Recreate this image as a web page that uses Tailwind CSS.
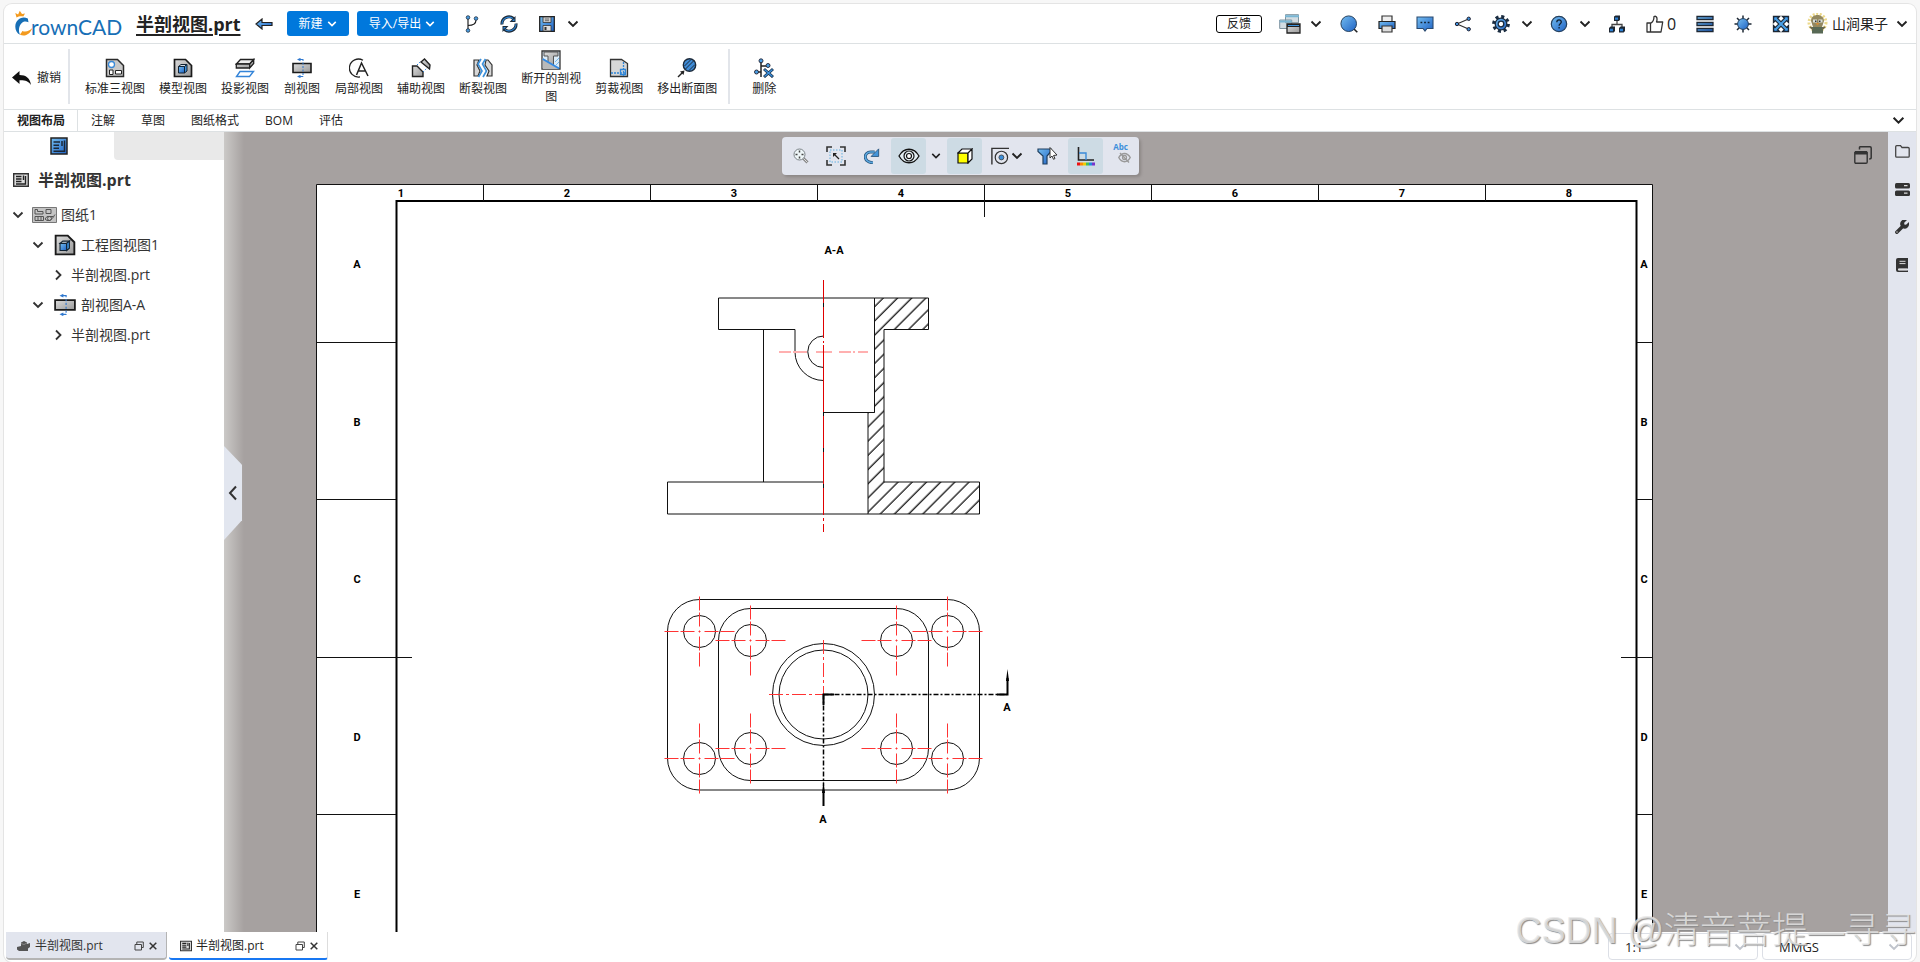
<!DOCTYPE html>
<html lang="zh-CN">
<head>
<meta charset="utf-8">
<title>半剖视图.prt - CrownCAD</title>
<meta name="viewport" content="width=device-width, initial-scale=1">
<script src="https://cdn.jsdelivr.net/npm/@tailwindcss/browser@4"></script>
</head>
<body class="h-screen overflow-hidden bg-[#f7f7f7] px-1 pt-1 font-['Open_Sans','Noto_Sans_CJK_SC',sans-serif] text-xs text-[#222]">

<!-- shared gradients and symbols -->
<svg class="absolute size-0" aria-hidden="true">
  <defs>
    <linearGradient id="blue" x1="0" y1="0" x2="1" y2="1"><stop offset="0" stop-color="#74bdf0"/><stop offset="1" stop-color="#1f62c4"/></linearGradient>
    <linearGradient id="grey" x1="0" y1="0" x2="1" y2="1"><stop offset="0" stop-color="#dcdcdc"/><stop offset="1" stop-color="#999"/></linearGradient>
    <symbol id="down" viewBox="0 0 12 12"><path d="M1.5 3.5 6 8l4.500-4.500" fill="none" stroke="currentColor" stroke-width="1.900"/></symbol>
    <symbol id="right" viewBox="0 0 12 12"><path d="M4 1.500 8.500 6 4 10.500" fill="none" stroke="currentColor" stroke-width="1.800"/></symbol>
    <symbol id="sheet" viewBox="0 0 16 16"><path d="M.7 1.700h14.600v12.600H.700z" fill="#ddd" stroke="#333" stroke-width="1.400"/><path d="M3 4.500h5.500M3 7h5.500M3 9.500h5.500M3 12h9.500V4M10.500 3.500V8" fill="none" stroke="#222" stroke-width="1.400"/></symbol>
    <symbol id="modelview" viewBox="0 0 20 20"><path d="M1.500 1.500h11l6 6v11h-17z" fill="url(#grey)" stroke="#1a1a1a" stroke-width="1.700"/><path d="M5.500 8.500h6v6.500h-6z" fill="url(#blue)" stroke="#123" stroke-width="1"/><path d="m5.500 8.500 2.500-2h6l-2.500 2z" fill="#d5dde4" stroke="#123" stroke-width="1"/><path d="M14 6.500v6.500l-2.500 2V8.500z" fill="#3f8fd8" stroke="#123" stroke-width="1"/></symbol>
    <symbol id="section" viewBox="0 0 20 20"><path d="M1 5.500h18v9H1z" fill="url(#grey)" stroke="#1a1a1a" stroke-width="1.600"/><path d="M11 1v18" stroke="#2f78cf" stroke-width="1" stroke-dasharray="2 1.500"/><path d="M11 1.500H7M11 18.500H7" stroke="#2f78cf"/><path d="m5 1.500 3.500-1.700v3.400zM5 18.500l3.500-1.700v3.400z" fill="#2f78cf"/></symbol>
    <symbol id="restore" viewBox="0 0 10 10"><path d="M1 3.500h6.500v5.500H1zM2.800 3.500V1H9.300v5.500H7.500" fill="none" stroke="#444" stroke-width="1"/></symbol>
  </defs>
</svg>

<div class="relative flex h-full flex-col overflow-hidden rounded-lg bg-white shadow-[0_0_0_1px_#e4e4e4]">

  <!-- top bar -->
  <header class="flex h-10 shrink-0 items-center justify-between border-b border-[#dde1e3] pl-[11px]">
    <div class="flex items-center">
      <svg class="h-7 w-[110px]" viewBox="0 0 110 28" role="img" aria-label="CrownCAD">
        <path d="M12.800 8.500C6.500 5.500.300 10 .300 16.800c0 3.600 1.800 6.600 4.700 8C3.200 20.500 3.800 15.800 7 12.800c1.800-1.700 4.300-1.800 6.500-.500z" fill="#176fb6"/>
        <path d="M4.800 24.600C9.800 27.300 15.500 24 17.200 18c-2.600 3-6.400 4.300-9.800 3-.800 1.600-1.600 2.800-2.600 3.600z" fill="#f39a1e"/>
        <path d="M1.500 7.500.300 3l2.800 1.500L4.800.800 7 4 10 3.500 8.300 6.500C6 5.800 3.500 6.300 1.500 7.500z" fill="#f39a1e"/>
        <text x="16" y="25" class="font-[Lato,sans-serif] text-[21px]" fill="#176fb6">rownCAD</text>
      </svg>
      <a href="#" class="ml-[11px] text-lg font-bold text-[#222] underline decoration-2 underline-offset-3">半剖视图.prt</a>
      <button class="ml-[14px] grid h-6 w-[18px] place-items-center" aria-label="返回"><svg class="h-3 w-[18px]" viewBox="0 0 18 12"><path d="M1 6 7 1v3.500h10v3H7V11z" fill="url(#blue)" stroke="#222" stroke-width="1.200"/></svg></button>
      <button class="ml-[14px] flex h-[25px] w-[62px] items-center justify-center gap-1 rounded-[3px] bg-[#0078dc] text-white">新建<svg class="size-[10px]"><use href="#down"/></svg></button>
      <button class="ml-2 flex h-[25px] w-[91px] items-center justify-center gap-1 rounded-[3px] bg-[#0078dc] text-white">导入/导出<svg class="size-[10px]"><use href="#down"/></svg></button>
      <button class="ml-3 grid h-6 w-6 place-items-center" aria-label="分支"><svg class="h-[18px] w-[14px]" viewBox="0 0 14 18"><path d="M3 3v12M3 10.500c5 0 8-1.500 8-5.500" fill="none" stroke="#222" stroke-width="1.200"/><g fill="#4a9be0" stroke="#234" stroke-width=".8"><circle cx="3" cy="2.500" r="1.800"/><circle cx="11" cy="3.500" r="1.800"/><circle cx="3" cy="15.500" r="1.800"/></g></svg></button>
      <button class="ml-[13px] grid h-6 w-6 place-items-center" aria-label="刷新"><svg class="size-[18px]" viewBox="0 0 18 18"><path d="M2 9.500a7 7 0 0 1 11.500-6M16 8.500A7 7 0 0 1 4.500 14.500" fill="none" stroke="#1d2a38" stroke-width="3"/><path d="M2 9a7 7 0 0 1 11.500-5.200M16 9A7 7 0 0 1 4.500 14.200" fill="none" stroke="#2f86d6" stroke-width="1.100"/><path d="M15.500 1v6h-6zM2.500 17v-6h6z" fill="#1d2a38"/><path d="M14.500 3.500V6H12zM3.500 14.500V12H6z" fill="#2f86d6"/></svg></button>
      <button class="ml-[14px] grid h-6 w-6 place-items-center" aria-label="保存"><svg class="size-4" viewBox="0 0 16 16"><path d="M.7.700h14.600v14.600H.700z" fill="url(#blue)" stroke="#222" stroke-width="1.300"/><path d="M4 1h8v5.500H4z" fill="#ccc" stroke="#333" stroke-width=".8"/><path d="M6 3h4M6 4.700h4" stroke="#555" stroke-width=".8"/><path d="M4 9.500h8V15H4z" fill="#ddd" stroke="#333" stroke-width=".8"/><path d="M5.500 11h2v3h-2z" fill="#333"/></svg></button>
      <button class="ml-2 grid h-6 w-3 place-items-center" aria-label="保存选项"><svg class="size-3"><use href="#down"/></svg></button>
    </div>

    <div class="flex items-center">
      <button class="mr-[9px] h-[18px] w-[46px] rounded-[3px] border border-black leading-4">反馈</button>
      <button class="grid h-7 w-[38px] place-items-center" aria-label="窗口"><svg class="h-5 w-[22px]" viewBox="0 0 22 20"><path d="M6.500.700h13v8h-13zM.700 6h12v8.500H.700z" fill="#d2dce2" stroke="#7d929e"/><path d="M6 2.200h14M.700 7.500h12" stroke="#79b6d4" stroke-width="2"/><path d="M8 10h13v9H8z" fill="url(#grey)" stroke="#222" stroke-width="1.300"/><path d="M8 11.500h13" stroke="#222" stroke-width="3"/><path d="M9 11.500h11" stroke="#3a91dc" stroke-width="1.200"/></svg></button>
      <button class="grid h-7 w-[14px] place-items-center" aria-label="窗口选项"><svg class="size-3"><use href="#down"/></svg></button>
      <button class="ml-[7px] grid h-7 w-[38px] place-items-center" aria-label="搜索"><svg class="size-[18px]" viewBox="0 0 18 18"><path d="m14 14 3.300 3.300" stroke="#222" stroke-width="1.600"/><circle cx="8.700" cy="8.700" r="7.800" fill="url(#blue)" stroke="#26415e"/></svg></button>
      <button class="grid h-7 w-[38px] place-items-center" aria-label="打印"><svg class="size-[18px]" viewBox="0 0 18 18"><path d="M4 1h10v6H4z" fill="#eee" stroke="#333" stroke-width="1.200"/><path d="M1 6.500h16v7H1z" fill="url(#blue)" stroke="#222" stroke-width="1.200"/><path d="M4 11h10v6H4z" fill="#ddd" stroke="#333" stroke-width="1.200"/></svg></button>
      <button class="grid h-7 w-[38px] place-items-center" aria-label="消息"><svg class="size-[18px]" viewBox="0 0 18 18"><path d="M1 2h16v11.500h-6L9 16l-2-2.500H1z" fill="url(#blue)" stroke="#2a4a70" stroke-width="1.100"/><path d="M4.500 7.500h1.800M8.100 7.500h1.800M11.700 7.500h1.800" stroke="#123" stroke-width="1.600"/></svg></button>
      <button class="grid h-7 w-[38px] place-items-center" aria-label="分享"><svg class="size-[18px]" viewBox="0 0 18 18"><path d="M14.500 4 3 9l11.500 5" fill="none" stroke="#333" stroke-width="1.200"/><g fill="#3d8fda" stroke="#223" stroke-width="1"><circle cx="14.700" cy="3.800" r="1.700"/><circle cx="3" cy="9" r="1.700"/><circle cx="14.700" cy="14.200" r="1.700"/></g></svg></button>
      <button class="grid h-7 w-[38px] place-items-center" aria-label="设置"><svg class="size-[18px]" viewBox="0 0 18 18"><circle cx="9" cy="9" r="7.200" fill="none" stroke="#1a2c40" stroke-width="3.400" stroke-dasharray="3 2.650"/><circle cx="9" cy="9" r="5.800" fill="url(#blue)" stroke="#1a2c40" stroke-width="1.300"/><circle cx="9" cy="9" r="2.800" fill="#fff" stroke="#1a2c40" stroke-width="1.300"/></svg></button>
      <button class="grid h-7 w-[14px] place-items-center" aria-label="设置选项"><svg class="size-3"><use href="#down"/></svg></button>
      <button class="ml-[6px] grid h-7 w-[38px] place-items-center" aria-label="帮助"><svg class="size-[18px]" viewBox="0 0 18 18"><circle cx="9" cy="9" r="7.700" fill="url(#blue)" stroke="#26415e" stroke-width="1.200"/><path d="M6.800 7.200c0-3.200 4.600-3 4.500-.2 0 1.700-2.200 1.700-2.200 3.700M9.100 12v1.500" fill="none" stroke="#123" stroke-width="1.300"/></svg></button>
      <button class="grid h-7 w-[14px] place-items-center" aria-label="帮助选项"><svg class="size-3"><use href="#down"/></svg></button>
      <button class="ml-[6px] grid h-7 w-[38px] place-items-center" aria-label="组织结构"><svg class="size-[18px]" viewBox="0 0 18 18"><path d="M9 5v4M4 13V9.500h10V13" fill="none" stroke="#444" stroke-width="1.300"/><path d="M6 1.500 7.500.500H12V5l-1.300 1H6zM1 13l1.500-1.500H7V16l-1.300 1.500H1zM11 13l1.500-1.500H17V16l-1.300 1.500H11z" fill="#1d2733"/><path d="M7 2.500h3v2.300H7zM2 13.800h3v2.500H2zM12 13.800h3v2.500h-3z" fill="#2c80d3"/></svg></button>
      <button class="flex h-7 w-[50px] items-center gap-[3px] pl-[10px] text-base" aria-label="点赞 0"><svg class="size-[18px]" viewBox="0 0 18 18"><path d="M1 8h3.500v9H1zM4.500 8.500C7 7 8 5 8 1.500c2.500-1 3.800 1.500 2.500 5.500h6.200L15 17H4.500" fill="#fff" stroke="#333" stroke-width="1.300" stroke-linejoin="round"/></svg>0</button>
      <button class="grid h-7 w-[38px] place-items-center" aria-label="列表"><svg class="size-[18px]" viewBox="0 0 18 18"><g fill="url(#blue)" stroke="#1d2733" stroke-width="1.300"><path d="M1 1.500h16v3H1zM1 7.500h16v3H1zM1 13.500h16v3H1z"/></g></svg></button>
      <button class="grid h-7 w-[38px] place-items-center" aria-label="主题"><svg class="size-[18px]" viewBox="0 0 18 18"><path d="M9 .500v17M.500 9h17M3 3l12 12M15 3 3 15" stroke="#1d2733" stroke-width="1.500"/><circle cx="9" cy="9" r="5.400" fill="url(#blue)" stroke="#26415e"/></svg></button>
      <button class="grid h-7 w-[38px] place-items-center" aria-label="全屏"><svg class="size-[18px]" viewBox="0 0 18 18"><path d="M3 3l12 12M15 3 3 15" stroke="#1d2733" stroke-width="4.400"/><path d="M1.500 1.500h6l-6 6zM16.500 1.500v6l-6-6zM1.500 16.500v-6l6 6zM16.500 16.500h-6l6-6z" fill="#2c80d3" stroke="#1d2733" stroke-width="1.300"/><path d="M3 3l12 12M15 3 3 15" stroke="#4a9fe4" stroke-width="2.200"/></svg></button>
      <button class="ml-[7px] flex h-7 items-center gap-1 pr-2 text-sm">
        <svg class="size-[21px]" viewBox="0 0 21 21"><circle cx="10.500" cy="9.500" r="8.500" fill="none" stroke="#ecd98c" stroke-width="3" stroke-dasharray="2 1.500"/><path d="M4 8c0-4 3-6 6.500-6S17 4.500 17 8l-2 6H6z" fill="#93885f"/><path d="M6 6.500h4v3H6zM11.500 6.500h4v3h-4z" fill="#d9dfda"/><path d="M8 7.500h1.500V9H8zM12 7.500h1.500V9H12z" fill="#333"/><path d="M8.500 10h4l-2 2.500z" fill="#d38b35"/><path d="M5 14h11v6.500H5z" fill="#586955"/><path d="m3 14 3 2M18 14l-3 2" stroke="#6f6a4c" stroke-width="2"/></svg>
        <span>山涧果子</span>
        <svg class="ml-1 size-3"><use href="#down"/></svg>
      </button>
    </div>
  </header>

  <!-- ribbon -->
  <div class="flex h-[66px] shrink-0 items-center border-b border-[#dde1e3] pt-[2px] whitespace-nowrap">
    <button class="ml-2 flex items-center gap-[6px]"><svg class="h-[14px] w-[19px]" viewBox="0 0 19 14"><path d="M0 6.500 7.500 0v4C14 4 18 7 19 14c-2.500-4-6-5-11.500-4.800V13z" fill="#111"/></svg>撤销</button>
    <span class="mb-[2px] ml-[7px] h-[55px] w-[2px] bg-[#e2e5ea]"></span>
    <div class="ml-2 flex items-center">
      <button class="flex flex-col items-center px-[7px] leading-[18px]"><svg class="mb-[2px] size-5" viewBox="0 0 20 20"><path d="M1.500 1.500h11l6 6v11h-17z" fill="#c9c9c9" stroke="#2a2a2a" stroke-width="1.500"/><circle cx="6.500" cy="6.500" r="3" fill="#fff" stroke="#3a8ad8" stroke-width="1.300"/><path d="M4.500 12h3.500v4.500H4.500zM10.500 12.500h6V16h-6z" fill="#fff" stroke="#222"/></svg>标准三视图</button>
      <button class="flex flex-col items-center px-[7px] leading-[18px]"><svg class="mb-[2px] size-5"><use href="#modelview"/></svg>模型视图</button>
      <button class="flex flex-col items-center px-[7px] leading-[18px]"><svg class="mb-[2px] size-5" viewBox="0 0 20 20"><path d="M5.500 1.500h13.200l-4 4.500H1.300z" fill="#eee" stroke="#222" stroke-width="1.300"/><path d="M1.300 6h13.400v4H1.300zM14.700 6l4-4.500v4l-4 4.500z" fill="url(#grey)" stroke="#222" stroke-width="1.300"/><path d="M5 13.500h13.500l-4 5H1.500z" fill="#fff" stroke="#3484d8" stroke-width="1.400"/></svg>投影视图</button>
      <button class="flex flex-col items-center px-[8px] leading-[18px]"><svg class="mb-[2px] size-5"><use href="#section"/></svg>剖视图</button>
      <button class="flex flex-col items-center px-[7px] leading-[18px]"><svg class="mb-[2px] size-5" viewBox="0 0 20 20"><path d="M14 2.300A9 9 0 1 0 11 18.900" fill="none" stroke="#222" stroke-width="1.300"/><path d="M7.500 17 12.500 5l6.500 13M9.500 13h7" fill="none" stroke="#222" stroke-width="1.500"/></svg>局部视图</button>
      <button class="flex flex-col items-center px-[7px] leading-[18px]"><svg class="mb-[2px] size-5" viewBox="0 0 20 20"><path d="M1.500 8h4.500l6 6v4.500H1.500z" fill="url(#grey)" stroke="#222" stroke-width="1.400"/><path d="m6 7 4-4M12 14l4-4" stroke="#3484d8" stroke-dasharray="1.500 1.500"/><path d="m10 4 3.500-3 5.500 6-.500 4z" fill="url(#grey)" stroke="#222" stroke-width="1.400"/></svg>辅助视图</button>
      <button class="flex flex-col items-center px-[7px] leading-[18px]"><svg class="mb-[2px] size-5" viewBox="0 0 20 20"><path d="M6 2H1v16h4l2-5-3-6zM13 2h2l4 5v11h-5l2-5-4-6z" fill="#d7d7d7" stroke="#333" stroke-width="1.200"/><path d="M8 1 5 6l4 7-3.500 6M12.500 1 9.500 6l4 7L10 19" fill="none" stroke="#3e91da" stroke-width="1.700"/></svg>断裂视图</button>
      <button class="flex flex-col items-center px-[7px] leading-[18px]"><svg class="size-5" viewBox="0 0 20 20"><path d="M1 1h18v18H1z" fill="#dcecf8" stroke="#333" stroke-width="1.300"/><path d="M3 2h14v4h-4.500v10L7 12V6H3z" fill="url(#grey)" stroke="#555"/><path d="m1.700 8 16.600 11H1.700z" fill="#b9b9b9"/><path d="m1.700 9 16.500 9.500" stroke="#3289e3" stroke-width="2"/><path d="m14 12 4-4M15 15l3-3" stroke="#77b7eb"/></svg>断开的剖视<br>图</button>
      <button class="flex flex-col items-center px-[7px] leading-[18px]"><svg class="mb-[2px] size-5" viewBox="0 0 20 20"><path d="M1.500 1.500h11l6 4v13h-17z" fill="#d7d7d7" stroke="#333" stroke-width="1.300"/><path d="M2 15h15M14.500 4v14" fill="none" stroke="#2f86d8" stroke-width="1.300" stroke-dasharray="2 1"/><path d="M11.500 11.500h5v5h-5z" fill="none" stroke="#2f86d8" stroke-width="1.300"/></svg>剪裁视图</button>
      <button class="flex flex-col items-center px-[7px] leading-[18px]"><svg class="mb-[2px] size-5" viewBox="0 0 20 20"><circle cx="12.500" cy="7" r="6.200" fill="#3e8cd8" stroke="#1c2a3a" stroke-width="1.400"/><path d="m7.500 8 6-6M8.500 11l8.500-8.500M12 12.500l6-6" stroke="#1c2a3a"/><path d="m1 19 4-4" stroke="#222" stroke-width="1.400"/><path d="m7.500 12.500-1 4.500-3.500-3.500z" fill="#222"/></svg>移出断面图</button>
    </div>
    <span class="mb-[2px] ml-1 h-[55px] w-[2px] bg-[#e2e5ea]"></span>
    <button class="ml-[15px] flex flex-col items-center px-[7px] leading-[18px]"><svg class="mb-[2px] size-5" viewBox="0 0 20 20"><path d="M7 3v16M7 8h7M2.500 14H7" stroke="#222" stroke-width="1.500"/><g fill="#4a9fe4" stroke="#223" stroke-width=".9"><circle cx="7" cy="2.800" r="2"/><circle cx="14" cy="7.500" r="2"/><circle cx="2.500" cy="14" r="2"/></g><path d="m10 11 9 8M19 11l-9 8" stroke="#1d3550" stroke-width="3"/><path d="m10.500 11.500 8 7M18.500 11.500l-8 7" stroke="#3c91dd" stroke-width="1.300"/></svg>删除</button>
  </div>

  <!-- ribbon tabs -->
  <nav class="flex h-[22px] shrink-0 items-stretch border-b border-[#dde1e3]">
    <button class="border-r border-[#dde1e3] pr-3 pl-[13px] font-bold">视图布局</button>
    <button class="px-[13px]">注解</button>
    <button class="px-[13px]">草图</button>
    <button class="px-[13px]">图纸格式</button>
    <button class="px-[13px]">BOM</button>
    <button class="px-[13px]">评估</button>
    <button class="mr-[11px] ml-auto grid place-items-center" aria-label="收起工具栏"><svg class="size-[13px]"><use href="#down"/></svg></button>
  </nav>

  <main class="flex min-h-0 flex-1">
    <!-- model tree -->
    <aside class="w-[220px] shrink-0 bg-white text-sm text-[#333]">
      <div class="flex h-7">
        <button class="grid flex-1 place-items-center" aria-label="模型树"><svg class="size-[18px]" viewBox="0 0 18 18"><path d="M1 1h16v16H1z" fill="url(#blue)" stroke="#222" stroke-width="1.500"/><path d="M3.500 5H10M3.500 8.200h5.500M3.500 11.200h5.500M3.500 14.300h11V3.500M12 4v5" fill="none" stroke="#1b2736" stroke-width="1.500"/></svg></button>
        <button class="flex-1 rounded-bl bg-[#e9e9e9]" aria-label="属性"></button>
      </div>
      <h1 class="flex h-10 items-center gap-[9px] pl-[9px] text-base font-bold"><svg class="size-4"><use href="#sheet"/></svg>半剖视图.prt</h1>
      <ul>
        <li class="flex h-[30px] items-center pl-2">
          <button class="mr-2 grid size-3 place-items-center" aria-label="折叠"><svg class="size-3"><use href="#down"/></svg></button>
          <svg class="mr-1 h-4 w-[25px]" viewBox="0 0 25 16"><path d="M.5.500h24v15H.500z" fill="#c4c4c4" stroke="#777"/><path d="M3 2.500h2.500V4.500H11v2.500H3zM14 2.500h5v4h-5zM3 9.500h8.500v4H3zM6 9.500v4M9 9.500v4M13 12l2-2.500h6.500l1.500-2M13 12l2 1.500h3l4-4" fill="none" stroke="#555"/><circle cx="17.500" cy="11.500" r="2" fill="none" stroke="#555"/></svg>图纸1
        </li>
        <li class="flex h-[30px] items-center pl-7">
          <button class="mr-[10px] grid size-3 place-items-center" aria-label="折叠"><svg class="size-3"><use href="#down"/></svg></button>
          <svg class="mr-[5px] size-[22px]"><use href="#modelview"/></svg>工程图视图1
        </li>
        <li class="flex h-[30px] items-center pl-12">
          <button class="mr-[7px] grid size-3 place-items-center" aria-label="展开"><svg class="size-3"><use href="#right"/></svg></button>半剖视图.prt
        </li>
        <li class="flex h-[30px] items-center pl-7">
          <button class="mr-[10px] grid size-3 place-items-center" aria-label="折叠"><svg class="size-3"><use href="#down"/></svg></button>
          <svg class="mr-[5px] size-[22px]"><use href="#section"/></svg>剖视图A-A
        </li>
        <li class="flex h-[30px] items-center pl-12">
          <button class="mr-[7px] grid size-3 place-items-center" aria-label="展开"><svg class="size-3"><use href="#right"/></svg></button>半剖视图.prt
        </li>
      </ul>
    </aside>

    <!-- drawing canvas -->
    <section class="relative min-w-0 flex-1 overflow-hidden bg-[#a6a1a0]">
      <svg class="block h-full w-full" viewBox="224 132 1664 800" preserveAspectRatio="xMinYMin slice" fill="none" stroke="#111" stroke-width="1">
        <defs>
          <linearGradient id="edge" x1="0" x2="1"><stop offset="0" stop-color="#cbc9c7"/><stop offset="1" stop-color="#a6a1a0"/></linearGradient>
          <pattern id="hatch" width="10.040" height="10" patternUnits="userSpaceOnUse" patternTransform="rotate(45)"><path d="M2 0v10" stroke="#000" stroke-width="1.200"/></pattern>
          <g id="hole"><circle r="16"/><path d="M-35 0h70M0-35v70" stroke="#f33" stroke-dasharray="14 2 14 4 2 4 14 2 14"/></g>
        </defs>
        <path d="M224 132h20v800h-20z" fill="url(#edge)" stroke="none"/>
        <path d="M316.500 184.500h1336v800h-1336z" fill="#fff"/>
        <path d="M396.500 985V201h1240V985" stroke="#000" stroke-width="2"/>
        <path d="M483.500 185v16M650.500 185v16M817.500 185v16M984.500 185v32M1151.500 185v16M1318.500 185v16M1485.500 185v16"/>
        <path d="M317 342.500h79M317 499.500h79M317 657.500h95M317 814.500h79M1637 342.500h15M1637 499.500h15M1621 657.500h31M1637 814.500h15"/>
        <g class="font-[Roboto,sans-serif] text-[11px] font-bold" fill="#000" stroke="none" text-anchor="middle">
          <text x="401" y="197">1</text><text x="567" y="197">2</text><text x="734" y="197">3</text><text x="901" y="197">4</text><text x="1068" y="197">5</text><text x="1235" y="197">6</text><text x="1402" y="197">7</text><text x="1569" y="197">8</text>
          <text x="357" y="268">A</text><text x="357" y="426">B</text><text x="357" y="583">C</text><text x="357" y="741">D</text><text x="357" y="898">E</text>
          <text x="1644" y="268">A</text><text x="1644" y="426">B</text><text x="1644" y="583">C</text><text x="1644" y="741">D</text><text x="1644" y="898">E</text>
          <text x="834" y="254">A-A</text><text x="1007" y="711">A</text><text x="823" y="823">A</text>
        </g>

        <!-- section A-A -->
        <path d="M874.500 298H928.500V329.500H884V482H979.500V514H868V412.500H874.500z" fill="url(#hatch)"/>
        <path d="M823.500 298h-105v31.500H795V352a28.500 28.500 0 0 0 28.500 28.500M823.500 336a15.750 15.750 0 0 0 0 31.500M763.500 329.500V482M823.500 482h-156v32H868M823.500 298h51M823.500 412.500h51"/>
        <path d="M779 352h12M793 352h14M816 352h16M839 352h12M853 352h2M858 352h10" stroke="#ffb0b0" stroke-width="2"/>
        <path d="M823.500 280v58M823.500 341v2M823.500 345v170M823.500 518v3M823.500 524v8" stroke="#e00000"/>
        <path d="M823.500 303v4M823.500 412v4M823.500 448v4M823.500 484v4"/>

        <!-- plan view -->
        <rect x="667.500" y="599.500" width="312" height="190.500" rx="32"/>
        <rect x="718.500" y="608.500" width="210" height="172" rx="32"/>
        <circle cx="823.500" cy="694.500" r="51"/>
        <circle cx="823.500" cy="694.500" r="44.500"/>
        <use href="#hole" x="699.500" y="631.500"/><use href="#hole" x="947.500" y="631.500"/><use href="#hole" x="699.500" y="758.500"/><use href="#hole" x="947.500" y="758.500"/>
        <use href="#hole" x="750.500" y="640.500"/><use href="#hole" x="896.500" y="640.500"/><use href="#hole" x="750.500" y="748.500"/><use href="#hole" x="896.500" y="748.500"/>
        <path d="M823.500 640v54M769 694.500h54" stroke="#f33" stroke-dasharray="14 3 3 3"/>
        <path d="M823.500 694.500H1007M823.500 694.500V786" stroke="#000" stroke-width="1.500" stroke-dasharray="5 2 2 2"/>
        <path d="M823.500 705V694.500H834M997 694.500H1007.500V678M823.500 806V790" stroke="#000" stroke-width="2"/>
        <path d="m1007.500 669 1.500 12h-3zM823.500 781l1.500 12h-3z" fill="#000" stroke="none"/>
      </svg>

      <!-- panel handle -->
      <button class="absolute top-[314px] left-0 grid h-[94px] w-[18px] place-items-center bg-[#e2e6ef] [clip-path:polygon(0_0,100%_20%,100%_79%,0_100%)]" aria-label="收起面板"><svg class="h-4 w-[10px]" viewBox="0 0 10 16"><path d="M8 1.500 2 8l6 6.500" fill="none" stroke="#333" stroke-width="2"/></svg></button>

      <!-- view toolbar -->
      <div class="absolute top-[5px] left-[558px] flex h-[38px] w-[357px] items-center rounded bg-[#e2e5ee] pl-[1px] shadow-[2px_2px_3px_#8c8786]">
        <button class="grid h-9 w-[35px] place-items-center" aria-label="缩放"><svg class="size-4" viewBox="0 0 16 16"><path d="m9.500 9.500 5 5" stroke="#888" stroke-width="3"/><path d="m9.500 9.500 5 5" stroke="#ddd" stroke-width="1"/><circle cx="6.500" cy="6.500" r="5.500" fill="#eef6f8" stroke="#7b8287"/><path d="M6.500 2.500v2M6.500 8.500v2M2.500 6.500h2M8.500 6.500h2" stroke="#444" stroke-width="1.500"/></svg></button>
        <button class="grid h-9 w-[35px] place-items-center" aria-label="适应窗口"><svg class="size-5" viewBox="0 0 20 20"><path d="M1 6V1h5M14 1h5v5M19 14v5h-5M6 19H1v-5" fill="none" stroke="#333" stroke-width="1.600"/><path d="M4 4h12v12H4z" fill="none" stroke="#62b1e2" stroke-dasharray="1.500 1.500"/><path d="m8 8 5 5" stroke="#222" stroke-width="1.300"/><path d="M7 7h4l-4 4z" fill="#222"/></svg></button>
        <button class="ml-[1px] grid h-9 w-[35px] place-items-center" aria-label="旋转"><svg class="size-4" viewBox="0 0 18 18"><path d="M10 16.500C-1 16.500-1 4 8 4.500h4" fill="none" stroke="#27547a" stroke-width="3.400"/><path d="M10 16.500C-1 16.500-1 4 8 4.500h4" fill="none" stroke="#5aa7e0" stroke-width="1.800"/><path d="M16.500 1v8.500H8z" fill="#4395da" stroke="#27547a"/></svg></button>
        <button class="ml-[2px] grid h-9 w-[35px] place-items-center rounded-[3px] bg-[#cddbe4]" aria-label="显示"><svg class="h-4 w-[22px]" viewBox="0 0 22 16"><path d="M1 8c5-9 15-9 20 0-5 9-15 9-20 0z" fill="#e2edf2" stroke="#111" stroke-width="1.300"/><circle cx="11" cy="8" r="5" fill="none" stroke="#111" stroke-width="1.200"/><circle cx="11" cy="8" r="2.500" fill="#fff" stroke="#111" stroke-width="1.200"/></svg></button>
        <button class="grid h-9 w-5 place-items-center" aria-label="显示选项"><svg class="size-[10px]"><use href="#down"/></svg></button>
        <button class="ml-[1px] grid h-9 w-[35px] place-items-center rounded-[3px] bg-[#cddbe4]" aria-label="渲染模式"><svg class="size-4" viewBox="0 0 16 16"><path d="M1 5h10v10H1z" fill="#ff0" stroke="#111" stroke-width="1.200"/><path d="m1 5 4-4h10l-4 4zM15 1v10l-4 4V5z" fill="#fff" stroke="#111" stroke-width="1.200"/></svg></button>
        <button class="ml-2 flex h-9 w-9 items-center gap-[2px]" aria-label="标注显示"><svg class="h-[18px] w-[19px] shrink-0" viewBox="0 0 20 18"><path d="M2 18V1h18" fill="none" stroke="#333" stroke-width="1.500"/><circle cx="12" cy="10.500" r="6.500" fill="none" stroke="#333" stroke-width="1.300"/><circle cx="12" cy="10.500" r="2.600" fill="#3c8fda" stroke="#333" stroke-width=".8"/></svg><svg class="size-3 shrink-0"><use href="#down"/></svg></button>
        <button class="ml-1 grid h-9 w-[35px] place-items-center" aria-label="过滤"><svg class="h-[18px] w-[21px]" viewBox="0 0 21 18"><path d="M1 2h13v2.500L10 9v8H6V9L1 4.500z" fill="url(#blue)" stroke="#203f5f" stroke-width="1.200"/><path d="m13 .500 7 7.500-3.500.500 1.500 3-1.500.800L15 9l-2 2z" fill="#fff" stroke="#333"/></svg></button>
        <button class="ml-[3px] grid h-9 w-[35px] place-items-center rounded-[3px] bg-[#cddbe4]" aria-label="图层颜色"><svg class="h-[19px] w-[18px]" viewBox="0 0 18 19"><path d="M1.500 0v13H17" fill="none" stroke="#222" stroke-width="1.600"/><path d="M2 6h7v7" fill="none" stroke="#3a8bd8" stroke-width="1.400"/><path d="M0 15.500h3v3H0z" fill="#e11"/><path d="M3 15.500h3v3H3z" fill="#f80"/><path d="M6 15.500h3v3H6z" fill="#ec0"/><path d="M9 15.500h3v3H9z" fill="#4b5"/><path d="M12 15.500h3v3h-3z" fill="#28d"/><path d="M15 15.500h3v3h-3z" fill="#73c"/></svg></button>
        <button class="flex h-9 w-[35px] flex-col items-center pt-1" aria-label="隐藏注解"><span class="text-[8px] leading-[10px] font-bold text-[#3d8fdb]">Abc</span><svg class="ml-2 h-[11px] w-[13px]" viewBox="0 0 13 11"><path d="M.8 5.500c3-5.500 8.500-5.500 11.400 0-3 5.500-8.400 5.500-11.400 0z" fill="none" stroke="#999" stroke-width="1.500"/><circle cx="6.500" cy="5.500" r="2" fill="#eee" stroke="#999" stroke-width="1.300"/><path d="m2 1 9 9.500" stroke="#999" stroke-width="1.300"/></svg></button>
      </div>

      <button class="absolute top-[14px] right-4 size-[18px]" aria-label="窗口布局"><svg class="size-[18px]" viewBox="0 0 18 18"><path d="M5.500 3.500V1.500Q5.500.800 6.500.800H16Q17.200.800 17.200 2v9.500q0 1.500-2 1.500" fill="none" stroke="#333" stroke-width="1.500"/><path d="M.8 6.500h12.400V16q0 1.200-1.200 1.200H2Q.800 17.200.800 16z" fill="#aaa5a5" stroke="#333" stroke-width="1.400"/><path d="M1 6.700h12" stroke="#333" stroke-width="3.400"/></svg></button>
    </section>

    <!-- side tools -->
    <aside class="flex w-7 shrink-0 flex-col items-center gap-[22px] bg-[#e2e5ee] pt-[11px]">
      <button class="grid size-4 place-items-center" aria-label="文件夹"><svg class="h-[13px] w-[15px]" viewBox="0 0 15 13"><path d="M.7 1.700Q.700.700 1.700.700H5.500L7 2.500h6q1.200 0 1.200 1v7.700q0 1-1 1H1.700q-1 0-1-1z" fill="none" stroke="#444" stroke-width="1.300"/></svg></button>
      <button class="grid size-4 place-items-center" aria-label="数据"><svg class="h-[13px] w-[15px]" viewBox="0 0 15 13"><rect width="15" height="5.500" rx="1.500" fill="#333"/><rect y="7.500" width="15" height="5.500" rx="1.500" fill="#333"/><path d="M9 2.700h3.500M9 10.200h3.500" stroke="#ddd" stroke-width="1.300"/></svg></button>
      <button class="grid size-4 place-items-center" aria-label="工具"><svg class="size-[14px]" viewBox="0 0 14 14"><path d="m1.800 12.200 5.500-5.500" stroke="#333" stroke-width="3.400" stroke-linecap="round"/><path d="M12 0A4.500 4.500 0 0 0 5.500 5.500L8.500 8.500A4.500 4.500 0 0 0 14 3.500V2L11 4.700 9.300 4.500 9.200 2.800z" fill="#333"/><circle cx="2" cy="12" r=".7" fill="#ddd"/></svg></button>
      <button class="grid size-4 place-items-center" aria-label="手册"><svg class="h-[14px] w-3" viewBox="0 0 12 14"><path d="M2 0h10v10.500H2.500q-1.200 1.200 0 2H12V14H2Q0 14 0 12V2Q0 0 2 0z" fill="#333"/><path d="M2.500 11.500H11" stroke="#ddd" stroke-width="1.500"/><path d="M3.500 3.300h6M3.500 5.600h6" stroke="#ddd"/></svg></button>
    </aside>
  </main>

  <!-- status bar -->
  <footer class="flex h-[30px] shrink-0 items-start justify-between px-1 pl-[2px]">
    <div class="flex gap-[2px]">
      <div class="flex h-7 w-[161px] items-center rounded-b border-r border-b-2 border-[#b4b4b4] bg-[#e2e5ee] pt-[1px] pl-[11px]">
        <button class="flex flex-1 items-center gap-1 text-[#333]"><svg class="h-3 w-[14px]" viewBox="0 0 14 12"><path d="M0 7 4 6V2.500L7 1l3 1.500V4l3-1v4l-2 1.500V11H2L0 9.500z" fill="#555"/><path d="M4 3.500 7 4.500l3-1.500" fill="none" stroke="#888"/></svg>半剖视图.prt</button>
        <button class="mr-[5px]" aria-label="还原"><svg class="size-[10px]"><use href="#restore"/></svg></button>
        <button class="mr-[9px]" aria-label="关闭"><svg class="size-2" viewBox="0 0 8 8"><path d="m.7.700 6.600 6.600M7.300.700.700 7.300" stroke="#333" stroke-width="1.500"/></svg></button>
      </div>
      <div class="flex h-7 w-[159px] items-center rounded-b-[3px] border-r border-b-2 border-r-[#ddd] border-b-[#1877f2] bg-white pt-[1px] pl-[11px]">
        <button class="flex flex-1 items-center gap-1"><svg class="size-3"><use href="#sheet"/></svg>半剖视图.prt</button>
        <button class="mr-[5px]" aria-label="还原"><svg class="size-[10px]"><use href="#restore"/></svg></button>
        <button class="mr-[9px]" aria-label="关闭"><svg class="size-2" viewBox="0 0 8 8"><path d="m.7.700 6.600 6.600M7.300.700.700 7.300" stroke="#333" stroke-width="1.500"/></svg></button>
      </div>
    </div>
    <div class="flex gap-1 pt-[1px]">
      <div class="relative">
        <select aria-label="比例" class="h-[27px] w-[150px] appearance-none rounded border border-[#dcdfe6] bg-white pt-[2px] pl-4 text-[13px]"><option>1:1</option></select>
        <svg class="pointer-events-none absolute top-2 right-3 size-3 text-[#c0c4cc]"><use href="#down"/></svg>
      </div>
      <div class="relative">
        <select aria-label="单位" class="h-[27px] w-[150px] appearance-none rounded border border-[#dcdfe6] bg-white pt-[2px] pl-4 text-[13px]"><option>MMGS</option></select>
        <svg class="pointer-events-none absolute top-2 right-3 size-3 text-[#c0c4cc]"><use href="#down"/></svg>
      </div>
    </div>
  </footer>

  <p class="pointer-events-none absolute right-0 bottom-1 font-['Liberation_Sans','Noto_Sans_CJK_SC',sans-serif] text-[36px] leading-[54px] font-light whitespace-nowrap text-[#e8e8e8]/80 [text-shadow:1px_1px_1px_#8c8c8c]">CSDN @清音菩提—寻寻</p>
</div>
</body>
</html>
